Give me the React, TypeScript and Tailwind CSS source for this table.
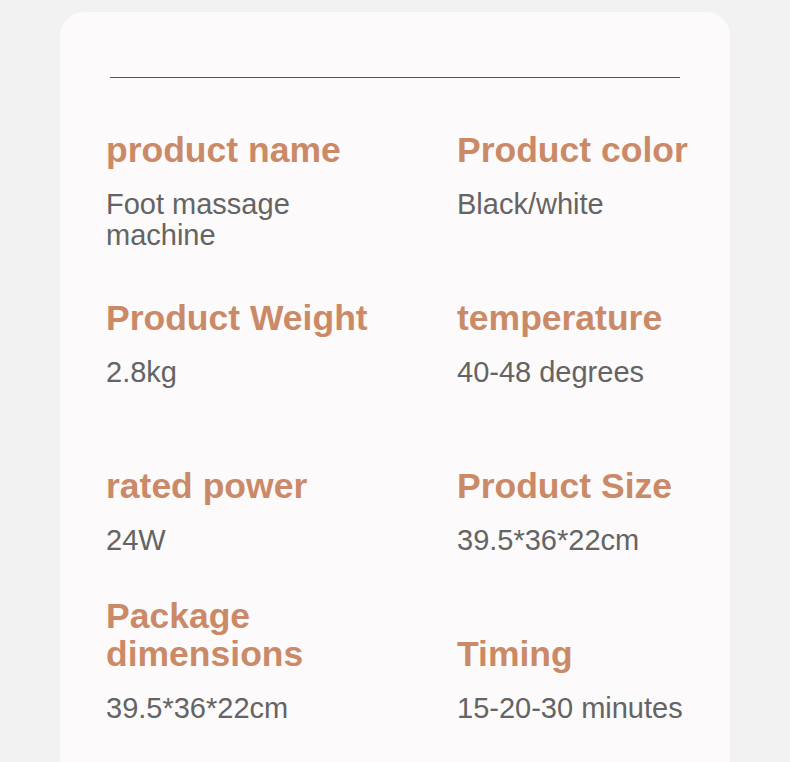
const specs = [
  [
    { label: 'product name', value: 'Foot massage machine' },
    { label: 'Product color', value: 'Black/white' },
  ],
  [
    { label: 'Product Weight', value: '2.8kg' },
    { label: 'temperature', value: '40-48 degrees' },
  ],
  [
    { label: 'rated power', value: '24W' },
    { label: 'Product Size', value: '39.5*36*22cm' },
  ],
  [
    { label: 'Package dimensions', value: '39.5*36*22cm' },
    { label: 'Timing', value: '15-20-30 minutes' },
  ],
]

function SpecCell({ label, value }: { label: string; value: string }) {
  return (
    <div className="flex flex-col">
      <div className="h-[76px] flex items-end">
        <h3 className="text-[35.5px] leading-[38px] font-bold text-[#cb8a67] w-[300px]">{label}</h3>
      </div>
      <p className="mt-[20px] h-[72px] text-[29px] leading-[31px] text-[#646464] w-[230px]">{value}</p>
    </div>
  )
}

export default function App() {
  return (
    <div
      className="min-h-[762px] bg-[#f2f2f2] px-[60px] pt-[12px] overflow-hidden"
      style={{ fontFamily: '"Liberation Sans", Arial, sans-serif' }}
    >
      <div className="bg-[#fcfafa] rounded-t-3xl h-[800px] pt-[65px]">
        <div className="mx-[50px] h-px bg-[#555]" />
        <div className="pl-[46px] pt-[15px]">
          {specs.map((row, i) => (
            <div key={i} className="grid grid-cols-[351px_1fr]">
              {row.map((s) => (
                <SpecCell key={s.label} label={s.label} value={s.value} />
              ))}
            </div>
          ))}
        </div>
      </div>
    </div>
  )
}
